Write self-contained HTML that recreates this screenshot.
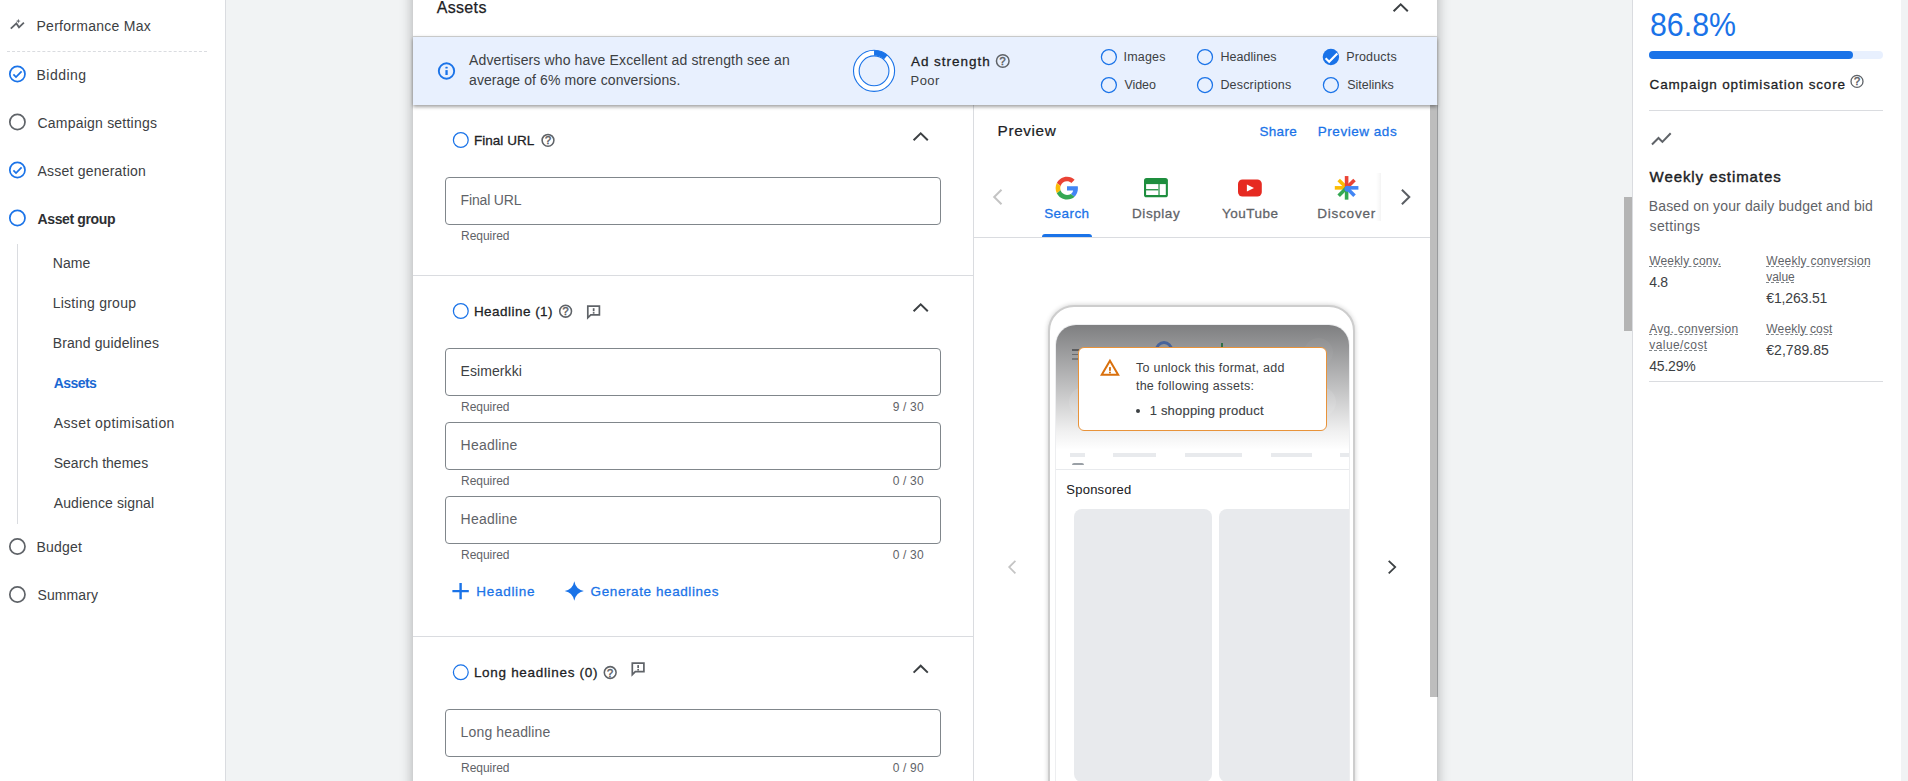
<!DOCTYPE html>
<html lang="en"><head><meta charset="utf-8"><title>Assets - Performance Max</title>
<style>
html,body{margin:0;padding:0;}
body{width:1908px;height:781px;overflow:hidden;background:#f1f3f4;font-family:"Liberation Sans",sans-serif;}
#root{position:relative;width:1908px;height:781px;overflow:hidden;}
.g{position:absolute;left:0;top:0;width:0;height:0;margin:0;padding:0;}
.g>*{position:absolute;}
.t{white-space:pre;line-height:normal;z-index:3;}
.b{box-sizing:border-box;}
svg{overflow:visible;}

</style></head>
<body>
<div id="root">
<nav class="g" aria-label="Campaign steps">
<div style="left:0;top:0;width:225px;height:781px;background:#fff;border-right:1px solid #dadce0;"></div>
<svg style="left:8px;top:16px" width="20" height="16" viewBox="8 16 20 16">
  <polyline points="10.8,28.600 16.400,23.400 19,27.300 23.900,22.600" fill="none" stroke="#5f6368" stroke-width="1.800" stroke-linejoin="miter"/>
  <path d="M18.300 18.700 L18.900 20.500 L20.700 21.100 L18.900 21.700 L18.300 23.500 L17.700 21.700 L15.900 21.100 L17.700 20.500 Z" fill="#5f6368"/>
</svg>
<div style="left:7px;top:51px;width:200px;height:0;border-top:1px dashed #dadce0;"></div>
<div style="left:17px;top:244px;width:1px;height:280px;background:#dadce0;"></div>
<svg style="left:0;top:0" width="40" height="620" viewBox="0 0 40 620">
  <g fill="none" stroke-width="1.7">
    <circle cx="17.4" cy="74" r="7.6" stroke="#1a73e8"/>
    <circle cx="17.4" cy="122" r="7.6" stroke="#5f6368"/>
    <circle cx="17.4" cy="170" r="7.6" stroke="#1a73e8"/>
    <circle cx="17.4" cy="218" r="7.6" stroke="#1a73e8"/>
    <circle cx="17.4" cy="546.5" r="7.6" stroke="#5f6368"/>
    <circle cx="17.4" cy="594.5" r="7.6" stroke="#5f6368"/>
    <polyline points="13.4,74.4 16,77 21.6,71.3" stroke="#1a73e8"/>
    <polyline points="13.4,170.4 16,173 21.6,167.3" stroke="#1a73e8"/>
  </g>
</svg>
<span class="t" style="left:36.5px;top:17.80px;font-size:14px;color:#3c4043;letter-spacing:0.266px;">Performance Max</span>
<span class="t" style="left:36.5px;top:66.80px;font-size:14px;color:#3c4043;letter-spacing:0.464px;">Bidding</span>
<span class="t" style="left:37.5px;top:114.80px;font-size:14px;color:#3c4043;letter-spacing:0.216px;">Campaign settings</span>
<span class="t" style="left:37.5px;top:162.80px;font-size:14px;color:#3c4043;letter-spacing:0.215px;">Asset generation</span>
<span class="t" style="left:37.5px;top:210.80px;font-size:14px;color:#2d2f33;letter-spacing:-0.362px;font-weight:700;">Asset group</span>
<span class="t" style="left:52.7px;top:254.80px;font-size:14px;color:#3c4043;letter-spacing:0.114px;">Name</span>
<span class="t" style="left:52.7px;top:294.80px;font-size:14px;color:#3c4043;letter-spacing:0.260px;">Listing group</span>
<span class="t" style="left:52.7px;top:334.80px;font-size:14px;color:#3c4043;letter-spacing:0.127px;">Brand guidelines</span>
<span class="t" style="left:53.7px;top:374.80px;font-size:14px;color:#1967d2;letter-spacing:-0.566px;font-weight:700;">Assets</span>
<span class="t" style="left:53.7px;top:414.80px;font-size:14px;color:#3c4043;letter-spacing:0.416px;">Asset optimisation</span>
<span class="t" style="left:53.7px;top:454.80px;font-size:14px;color:#3c4043;letter-spacing:0.028px;">Search themes</span>
<span class="t" style="left:53.7px;top:494.80px;font-size:14px;color:#3c4043;letter-spacing:0.112px;">Audience signal</span>
<span class="t" style="left:36.5px;top:538.80px;font-size:14px;color:#3c4043;letter-spacing:0.204px;">Budget</span>
<span class="t" style="left:37.5px;top:586.80px;font-size:14px;color:#3c4043;letter-spacing:0.101px;">Summary</span>
</nav>
<main class="g" aria-label="Asset group">
<div style="left:413px;top:-20px;width:1024px;height:830px;background:#fff;box-shadow:0 0 12px rgba(0,0,0,.30);"></div>
<section class="g" aria-label="Asset fields">
<div style="left:973px;top:105px;width:1px;height:680px;background:#dadce0;"></div>
<div style="left:413px;top:275px;width:560px;height:1px;background:#dadce0;"></div>
<div style="left:413px;top:636px;width:560px;height:1px;background:#dadce0;"></div>
<div class="b" style="left:445px;top:177px;width:496px;height:48px;border:1px solid #80868b;border-radius:4px;"></div>
<div class="b" style="left:445px;top:348px;width:496px;height:48px;border:1px solid #80868b;border-radius:4px;"></div>
<div class="b" style="left:445px;top:422px;width:496px;height:48px;border:1px solid #80868b;border-radius:4px;"></div>
<div class="b" style="left:445px;top:496px;width:496px;height:48px;border:1px solid #80868b;border-radius:4px;"></div>
<div class="b" style="left:445px;top:709px;width:496px;height:48px;border:1px solid #80868b;border-radius:4px;"></div>
<svg style="left:0;top:0" width="1000" height="781" viewBox="0 0 1000 781">
  <g fill="none" stroke="#1a73e8" stroke-width="1.250">
    <circle cx="460.800" cy="140" r="7.400"/>
    <circle cx="460.800" cy="311" r="7.400"/>
    <circle cx="460.800" cy="672.300" r="7.400"/>
  </g>
  <g fill="none" stroke="#3c4043" stroke-width="2">
    <polyline points="913.600,140.300 920.700,133.400 927.800,140.300"/>
    <polyline points="913.600,311.300 920.700,304.400 927.800,311.300"/>
    <polyline points="913.600,672.600 920.700,665.700 927.800,672.600"/>
  </g>
  <!-- help circles -->
  <g fill="none" stroke="#5f6368" stroke-width="1.550">
    <circle cx="548" cy="140.300" r="5.900"/>
    <circle cx="565.600" cy="311.200" r="5.900"/>
    <circle cx="610.200" cy="672.500" r="5.900"/>
  </g>
  <!-- feedback icons -->
  <g fill="none" stroke="#5f6368" stroke-width="1.700" stroke-linejoin="miter">
    <path d="M587.800 306.200 H599.400 V314.800 H590.800 L587.800 317.800 Z"/>
    <path d="M632.300 663.100 H643.900 V671.700 H635.300 L632.300 674.700 Z"/>
  </g>
  <g fill="#5f6368">
    <rect x="592.800" y="308.200" width="1.700" height="3"/><rect x="592.800" y="312.100" width="1.700" height="1.600"/>
    <rect x="637.300" y="665.100" width="1.700" height="3"/><rect x="637.300" y="669" width="1.700" height="1.600"/>
  </g>
  <!-- plus -->
  <path d="M452.400 591.100 H468.800 M460.600 582.900 V599.300" stroke="#1a73e8" stroke-width="2.400" fill="none"/>
  <!-- sparkle -->
  <path d="M574.30 581.30 Q575.80 589.50 583.90 591.00 Q575.80 592.50 574.30 600.70 Q572.80 592.50 564.70 591.00 Q572.80 589.50 574.30 581.30 Z" fill="#1a73e8"/>
</svg>
<span class="t" style="left:473.9px;top:133.30px;font-size:13.5px;color:#202124;letter-spacing:0.049px;-webkit-text-stroke:0.28px #202124;">Final URL</span>
<span class="t" style="left:460.6px;top:192.00px;font-size:14px;color:#5f6368;letter-spacing:-0.169px;">Final URL</span>
<span class="t" style="left:461.0px;top:228.70px;font-size:12px;color:#5f6368;letter-spacing:-0.032px;">Required</span>
<span class="t" style="left:473.9px;top:304.20px;font-size:13.5px;color:#202124;letter-spacing:0.469px;-webkit-text-stroke:0.28px #202124;">Headline (1)</span>
<span class="t" style="left:460.6px;top:363.00px;font-size:14px;color:#3c4043;letter-spacing:0.068px;">Esimerkki</span>
<span class="t" style="left:461.0px;top:399.90px;font-size:12px;color:#5f6368;letter-spacing:-0.032px;">Required</span>
<span class="t" style="left:892.8px;top:399.90px;font-size:12px;color:#5f6368;letter-spacing:0.150px;">9 / 30</span>
<span class="t" style="left:460.6px;top:436.80px;font-size:14px;color:#5f6368;letter-spacing:0.218px;">Headline</span>
<span class="t" style="left:461.0px;top:473.90px;font-size:12px;color:#5f6368;letter-spacing:-0.032px;">Required</span>
<span class="t" style="left:892.8px;top:473.90px;font-size:12px;color:#5f6368;letter-spacing:0.150px;">0 / 30</span>
<span class="t" style="left:460.6px;top:510.80px;font-size:14px;color:#5f6368;letter-spacing:0.218px;">Headline</span>
<span class="t" style="left:461.0px;top:547.90px;font-size:12px;color:#5f6368;letter-spacing:-0.032px;">Required</span>
<span class="t" style="left:892.8px;top:547.90px;font-size:12px;color:#5f6368;letter-spacing:0.150px;">0 / 30</span>
<span class="t" style="left:476.2px;top:584.00px;font-size:13.5px;color:#1a73e8;letter-spacing:0.731px;-webkit-text-stroke:0.28px #1a73e8;">Headline</span>
<span class="t" style="left:590.6px;top:584.00px;font-size:13.5px;color:#1a73e8;letter-spacing:0.589px;-webkit-text-stroke:0.28px #1a73e8;">Generate headlines</span>
<span class="t" style="left:473.9px;top:665.10px;font-size:13.5px;color:#202124;letter-spacing:0.692px;-webkit-text-stroke:0.28px #202124;">Long headlines (0)</span>
<span class="t" style="left:460.6px;top:723.80px;font-size:14px;color:#5f6368;letter-spacing:0.143px;">Long headline</span>
<span class="t" style="left:461.0px;top:760.90px;font-size:12px;color:#5f6368;letter-spacing:-0.032px;">Required</span>
<span class="t" style="left:892.8px;top:760.90px;font-size:12px;color:#5f6368;letter-spacing:0.150px;">0 / 90</span>
<span class="t" style="left:544.9px;top:134.34px;font-size:11px;color:#5f6368;letter-spacing:0.000px;-webkit-text-stroke:0.5px #5f6368;">?</span>
<span class="t" style="left:562.5px;top:305.24px;font-size:11px;color:#5f6368;letter-spacing:0.000px;-webkit-text-stroke:0.5px #5f6368;">?</span>
<span class="t" style="left:607.1px;top:666.54px;font-size:11px;color:#5f6368;letter-spacing:0.000px;-webkit-text-stroke:0.5px #5f6368;">?</span>
</section>
<section class="g" aria-label="Preview">
<div class="b" style="left:1430px;top:105px;width:8px;height:592px;background:#bdbdbd;border-right:1px solid #999b9d;"></div>
<div style="left:974px;top:237px;width:456px;height:1px;background:#dadce0;"></div>
<div style="left:1042px;top:234px;width:50px;height:3px;background:#1a73e8;border-radius:3px 3px 0 0;"></div>
<div style="left:1376px;top:173px;width:5px;height:48px;background:linear-gradient(to right,rgba(0,0,0,0),rgba(0,0,0,.045));"></div>
<svg style="left:974px;top:105px" width="456" height="140" viewBox="974 105 456 140">
  <polyline points="1001.500,189.700 994.200,197 1001.500,204.300" fill="none" stroke="#c4c4c4" stroke-width="2"/>
  <polyline points="1401.900,189.700 1409.300,197 1401.900,204.300" fill="none" stroke="#5a5e63" stroke-width="2"/>
  <!-- Google G -->
  <g transform="translate(1055.6 176.7) scale(0.475)">
    <path fill="#EA4335" d="M24 9.5c3.54 0 6.71 1.22 9.21 3.6l6.85-6.85C35.9 2.38 30.47 0 24 0 14.62 0 6.51 5.38 2.56 13.22l7.98 6.19C12.43 13.72 17.74 9.5 24 9.5z"/>
    <path fill="#4285F4" d="M46.98 24.55c0-1.57-.15-3.09-.38-4.55H24v9.02h12.94c-.58 2.96-2.26 5.48-4.78 7.18l7.73 6c4.51-4.18 7.09-10.36 7.09-17.65z"/>
    <path fill="#FBBC05" d="M10.53 28.59c-.48-1.45-.76-2.99-.76-4.59s.27-3.14.76-4.59l-7.98-6.19C.92 16.46 0 20.12 0 24c0 3.880.92 7.54 2.56 10.78l7.97-6.19z"/>
    <path fill="#34A853" d="M24 48c6.48 0 11.93-2.13 15.89-5.81l-7.73-6c-2.15 1.45-4.92 2.3-8.160 2.3-6.26 0-11.57-4.22-13.47-9.91l-7.98 6.190C6.51 42.62 14.62 48 24 48z"/>
  </g>
  <!-- Display -->
  <rect x="1144" y="178" width="23.900" height="19.300" rx="2.600" fill="#1e8e3e"/>
  <rect x="1146.100" y="184.100" width="12.100" height="5" fill="#fff"/>
  <rect x="1146.100" y="190.400" width="12.100" height="4.600" fill="#fff"/>
  <rect x="1159.900" y="184.100" width="5.900" height="10.900" fill="#fff"/>
  <rect x="1158.200" y="184.100" width="1.700" height="10.900" fill="#fff" fill-opacity=".35"/>
  <!-- YouTube -->
  <rect x="1238" y="179.500" width="23.800" height="17" rx="4.500" fill="#e62a21"/>
  <path d="M1246.900 184.500 L1254 188 L1246.900 191.500 Z" fill="#fff"/>
  <!-- Discover -->
  <g stroke-width="3.600" stroke-linecap="butt" fill="none">
    <path d="M1346.60 187.85 L1334.80 187.85" stroke="#fbbc04"/>
    <path d="M1346.60 187.85 L1338.68 179.93" stroke="#fbbc04"/>
    <path d="M1346.60 187.85 L1346.60 199.65" stroke="#34a853"/>
    <path d="M1346.60 187.85 L1338.68 195.77" stroke="#34a853"/>
    <path d="M1346.60 187.85 L1346.60 176.05" stroke="#ea4335"/>
    <path d="M1346.60 187.85 L1354.52 179.93" stroke="#ea4335"/>
    <path d="M1346.60 187.85 L1358.40 187.85" stroke="#4285f4"/>
    <path d="M1346.60 187.85 L1354.52 195.77" stroke="#4285f4"/>
  </g>
  <circle cx="1347.50" cy="188.75" r="3" fill="#4285f4"/>
</svg>
<svg style="left:1000px;top:555px" width="400" height="24" viewBox="1000 555 400 24">
  <polyline points="1015.400,560.900 1009.200,567.100 1015.400,573.300" fill="none" stroke="#c4c4c4" stroke-width="1.750"/>
  <polyline points="1388.700,560.900 1395.200,567.100 1388.700,573.300" fill="none" stroke="#3c4043" stroke-width="1.800"/>
</svg>

<!-- phone -->
<div class="b" style="left:1048.200px;top:304.600px;width:306.800px;height:520px;border-radius:26px;border:2.100px solid #cdcdcd;background:#fff;box-shadow:0 0 5px rgba(0,0,0,.20);"></div>
<div id="screen" style="left:1055.800px;top:325px;width:293.400px;height:470px;border-radius:20px 20px 0 0;overflow:hidden;background:#fff;box-shadow:0 0 0 1px #edeef0;">
  <div style="position:absolute;left:0;top:0;width:100%;height:125px;background:linear-gradient(rgba(32,33,36,.575),rgba(32,33,36,.31) 45%,rgba(32,33,36,.065) 85%,rgba(32,33,36,0));"></div>
  <!-- hamburger -->
  <div style="position:absolute;left:16px;top:24px;width:7px;height:1.500px;background:#5a5b5d;"></div>
  <div style="position:absolute;left:16px;top:28.500px;width:7px;height:1.500px;background:#6a6b6d;"></div>
  <div style="position:absolute;left:16px;top:33px;width:7px;height:1.500px;background:#77787a;"></div>
  <!-- avatar ghost -->
  <div style="position:absolute;left:248px;top:13px;width:29px;height:29px;border-radius:50%;background:rgba(255,255,255,.035);"></div>
  <!-- search pill ghost -->
  <div style="position:absolute;left:13px;top:62px;width:267px;height:30px;border-radius:15px;background:rgba(255,255,255,.10);"></div>
  <!-- logo ghosts -->
  <div style="position:absolute;left:99px;top:16.300px;width:18px;height:18px;border-radius:50%;border:3px solid #47639a;box-sizing:border-box;"></div>
  <div style="position:absolute;left:165.500px;top:17.500px;width:1.800px;height:6px;background:#2f6f45;"></div>
  <!-- skeleton -->
  <div style="position:absolute;left:14px;top:128px;width:15px;height:4px;background:#e8eaed;"></div>
  <div style="position:absolute;left:57.300px;top:128px;width:43.300px;height:4px;background:#e8eaed;"></div>
  <div style="position:absolute;left:129.400px;top:128px;width:56.600px;height:4px;background:#e8eaed;"></div>
  <div style="position:absolute;left:214.800px;top:128px;width:41px;height:4px;background:#e8eaed;"></div>
  <div style="position:absolute;left:284px;top:128px;width:12px;height:4px;background:#e8eaed;"></div>
  <div style="position:absolute;left:16px;top:137.800px;width:12px;height:2.700px;background:#9aa0a6;border-radius:2px 2px 0 0;"></div>
  <div style="position:absolute;left:0;top:143.500px;width:100%;height:1px;background:#e8eaed;"></div>
  <!-- cards -->
  <div style="position:absolute;left:17.800px;top:184.300px;width:138.600px;height:273px;border-radius:8px;background:#e8eaed;"></div>
  <div style="position:absolute;left:163.700px;top:184.300px;width:140px;height:273px;border-radius:8px;background:#e8eaed;"></div>
</div>
<!-- warning box -->
<div class="b" style="left:1078px;top:346.800px;width:249px;height:84.200px;border:1.300px solid #e8933a;border-radius:6px;background:#fff;"></div>
<svg style="left:1098px;top:357px" width="24" height="22" viewBox="1098 357 24 22">
  <path d="M1109.950 360.800 L1118.150 374.700 H1101.750 Z" fill="none" stroke="#d9700d" stroke-width="2" stroke-linejoin="miter"/>
  <rect x="1109" y="367.100" width="1.900" height="3.700" fill="#d9700d"/><rect x="1109" y="371.700" width="1.900" height="1.700" fill="#d9700d"/>
</svg>
<div style="left:1135.600px;top:408.800px;width:4.400px;height:4.400px;border-radius:50%;background:#3c4043;"></div>
<span class="t" style="left:997.6px;top:121.80px;font-size:15.3px;color:#202124;letter-spacing:0.624px;-webkit-text-stroke:0.22px #202124;">Preview</span>
<span class="t" style="left:1259.4px;top:123.80px;font-size:13.5px;color:#1a73e8;letter-spacing:0.346px;-webkit-text-stroke:0.28px #1a73e8;">Share</span>
<span class="t" style="left:1317.8px;top:123.80px;font-size:13.5px;color:#1a73e8;letter-spacing:0.532px;-webkit-text-stroke:0.28px #1a73e8;">Preview ads</span>
<span class="t" style="left:1044.2px;top:205.90px;font-size:13.5px;color:#1a73e8;letter-spacing:0.427px;-webkit-text-stroke:0.28px #1a73e8;">Search</span>
<span class="t" style="left:1132.0px;top:205.90px;font-size:13.5px;color:#5f6368;letter-spacing:0.564px;-webkit-text-stroke:0.28px #5f6368;">Display</span>
<span class="t" style="left:1221.9px;top:205.90px;font-size:13.5px;color:#5f6368;letter-spacing:0.493px;-webkit-text-stroke:0.28px #5f6368;">YouTube</span>
<span class="t" style="left:1317.3px;top:205.90px;font-size:13.5px;color:#5f6368;letter-spacing:0.769px;-webkit-text-stroke:0.28px #5f6368;">Discover</span>
<span class="t" style="left:1136.1px;top:360.90px;font-size:12.5px;color:#3c4043;letter-spacing:0.233px;">To unlock this format, add</span>
<span class="t" style="left:1135.9px;top:378.70px;font-size:12.5px;color:#3c4043;letter-spacing:0.276px;">the following assets:</span>
<span class="t" style="left:1149.7px;top:402.60px;font-size:13px;color:#3c4043;letter-spacing:0.196px;-webkit-text-stroke:0.12px #3c4043;">1 shopping product</span>
<span class="t" style="left:1066.2px;top:481.70px;font-size:13px;color:#202124;letter-spacing:0.269px;-webkit-text-stroke:0.05px #202124;">Sponsored</span>
</section>
<section class="g" aria-label="Ad strength">
<div style="z-index:2;left:413px;top:37px;width:1024px;height:68px;background:#e8f0fe;box-shadow:0 -1px 0 rgba(60,64,67,.21),0 2px 3.500px rgba(0,0,0,.36),0 -1px 3px rgba(0,0,0,.07);"></div>
<svg style="z-index:2;left:413px;top:36px" width="1024" height="69" viewBox="413 36 1024 69">
  <circle cx="446.500" cy="71" r="7.700" fill="none" stroke="#1a73e8" stroke-width="1.900"/>
  <rect x="445.400" y="70.100" width="2.300" height="4.900" fill="#1a73e8"/><rect x="445.400" y="66.700" width="2.300" height="1.800" rx=".5" fill="#1a73e8"/>
  <!-- ad strength ring -->
  <circle cx="874.05" cy="70.8" r="20.550" fill="#fff" stroke="#1a73e8" stroke-width="1.100"/>
  <path d="M874.05 52.95 A17.85 17.85 0 0 1 885.76 57.33" fill="none" stroke="#1a73e8" stroke-width="5.300"/>
  <circle cx="874.05" cy="70.8" r="14.900" fill="#e8f0fe" stroke="#1a73e8" stroke-width="1.100"/>
  <circle cx="1002.750" cy="61" r="6.300" fill="none" stroke="#5f6368" stroke-width="1.500"/>
  <g fill="none" stroke="#1a73e8" stroke-width="1.250">
    <circle cx="1108.9" cy="57" r="7.5"/><circle cx="1108.9" cy="85" r="7.5"/>
    <circle cx="1205" cy="57" r="7.5"/><circle cx="1205" cy="85" r="7.5"/>
    <circle cx="1330.9" cy="85" r="7.5"/>
  </g>
  <circle cx="1330.9" cy="57" r="8.2" fill="#1a73e8"/>
  <polyline points="1325.600,58.200 1329.200,61.700 1337.300,53.500" fill="none" stroke="#fff" stroke-width="2.200"/>
</svg>
<span class="t" style="left:469.0px;top:52.30px;font-size:14px;color:#3c4043;letter-spacing:0.133px;">Advertisers who have Excellent ad strength see an</span>
<span class="t" style="left:469.0px;top:71.90px;font-size:14px;color:#3c4043;letter-spacing:0.091px;">average of 6% more conversions.</span>
<span class="t" style="left:910.9px;top:53.90px;font-size:13.5px;color:#202124;letter-spacing:0.987px;-webkit-text-stroke:0.28px #202124;">Ad strength</span>
<span class="t" style="left:910.5px;top:72.70px;font-size:13px;color:#3c4043;letter-spacing:0.456px;">Poor</span>
<span class="t" style="left:1123.5px;top:50.00px;font-size:12.5px;color:#3c4043;letter-spacing:0.192px;">Images</span>
<span class="t" style="left:1124.5px;top:78.00px;font-size:12.5px;color:#3c4043;letter-spacing:-0.073px;">Video</span>
<span class="t" style="left:1220.4px;top:50.00px;font-size:12.5px;color:#3c4043;letter-spacing:0.057px;">Headlines</span>
<span class="t" style="left:1220.4px;top:78.00px;font-size:12.5px;color:#3c4043;letter-spacing:0.180px;">Descriptions</span>
<span class="t" style="left:1346.2px;top:50.00px;font-size:12.5px;color:#3c4043;letter-spacing:0.160px;">Products</span>
<span class="t" style="left:1347.2px;top:78.00px;font-size:12.5px;color:#3c4043;letter-spacing:0.013px;">Sitelinks</span>
<span class="t" style="left:999.6px;top:55.04px;font-size:11px;color:#5f6368;letter-spacing:0.000px;-webkit-text-stroke:0.5px #5f6368;">?</span>
</section>
<header class="g" aria-label="Assets">
<svg style="left:1390px;top:0px" width="22" height="16" viewBox="1390 0 22 16"><polyline points="1393.600,11.300 1400.700,4.400 1407.800,11.300" fill="none" stroke="#3c4043" stroke-width="2"/></svg>
<span class="t" style="left:436.7px;top:-1.20px;font-size:16px;color:#202124;letter-spacing:0.337px;-webkit-text-stroke:0.25px #202124;">Assets</span>
</header>
</main>
<aside class="g" aria-label="Campaign estimates">
<div style="left:1632px;top:0;width:268px;height:781px;background:#fff;border-left:1px solid #dadce0;"></div>
<div style="left:1624px;top:197px;width:8px;height:134px;background:#b4b4b4;"></div>
<div style="left:1649px;top:51px;width:234px;height:8px;border-radius:4px;background:#e8f0fe;"></div>
<div style="left:1649px;top:51px;width:204px;height:8px;border-radius:4px;background:#1a73e8;"></div>
<div style="left:1649px;top:110px;width:234px;height:1px;background:#dadce0;"></div>
<div style="left:1649px;top:381px;width:234px;height:1px;background:#dadce0;"></div>
<svg style="left:1645px;top:70px" width="240" height="80" viewBox="1645 70 240 80">
  <circle cx="1857" cy="81.400" r="6" fill="none" stroke="#5f6368" stroke-width="1.300"/>
  <polyline points="1652,144.500 1658.500,138 1662.400,141.900 1670.700,133.200" fill="none" stroke="#5f6368" stroke-width="2" stroke-linejoin="miter"/>
</svg>
<span class="t" style="left:1649.5px;top:6.10px;font-size:33px;color:#1a73e8;letter-spacing:0.000px;transform:scaleX(0.9184);transform-origin:0 0;">86.8%</span>
<span class="t" style="left:1649.6px;top:76.70px;font-size:13.5px;color:#202124;letter-spacing:0.820px;-webkit-text-stroke:0.28px #202124;">Campaign optimisation score</span>
<span class="t" style="left:1649.6px;top:167.70px;font-size:15px;color:#202124;letter-spacing:0.923px;-webkit-text-stroke:0.4px #202124;">Weekly estimates</span>
<span class="t" style="left:1648.8px;top:197.80px;font-size:14px;color:#5f6368;letter-spacing:0.139px;">Based on your daily budget and bid</span>
<span class="t" style="left:1649.6px;top:217.70px;font-size:14px;color:#5f6368;letter-spacing:0.307px;">settings</span>
<span class="t" style="left:1649.3px;top:254.10px;font-size:12px;color:#5f6368;letter-spacing:0.144px;text-decoration:underline dashed #80868b 1px;text-underline-offset:1px;">Weekly conv.</span>
<span class="t" style="left:1649.3px;top:273.80px;font-size:14px;color:#3c4043;letter-spacing:-0.388px;">4.8</span>
<span class="t" style="left:1766.3px;top:254.10px;font-size:12px;color:#5f6368;letter-spacing:0.237px;text-decoration:underline dashed #80868b 1px;text-underline-offset:1px;">Weekly conversion</span>
<span class="t" style="left:1766.3px;top:269.70px;font-size:12px;color:#5f6368;letter-spacing:-0.078px;text-decoration:underline dashed #80868b 1px;text-underline-offset:1px;">value</span>
<span class="t" style="left:1766.3px;top:289.90px;font-size:14px;color:#3c4043;letter-spacing:-0.150px;">€1,263.51</span>
<span class="t" style="left:1649.3px;top:321.80px;font-size:12px;color:#5f6368;letter-spacing:0.265px;text-decoration:underline dashed #80868b 1px;text-underline-offset:1px;">Avg. conversion</span>
<span class="t" style="left:1649.3px;top:337.60px;font-size:12px;color:#5f6368;letter-spacing:0.423px;text-decoration:underline dashed #80868b 1px;text-underline-offset:1px;">value/cost</span>
<span class="t" style="left:1649.3px;top:357.90px;font-size:14px;color:#3c4043;letter-spacing:-0.227px;">45.29%</span>
<span class="t" style="left:1766.3px;top:321.80px;font-size:12px;color:#5f6368;letter-spacing:0.167px;text-decoration:underline dashed #80868b 1px;text-underline-offset:1px;">Weekly cost</span>
<span class="t" style="left:1766.3px;top:341.60px;font-size:14px;color:#3c4043;letter-spacing:0.025px;">€2,789.85</span>
<span class="t" style="left:1853.9px;top:75.44px;font-size:11px;color:#5f6368;letter-spacing:0.000px;-webkit-text-stroke:0.5px #5f6368;">?</span>
</aside>
</div>
</body></html>
